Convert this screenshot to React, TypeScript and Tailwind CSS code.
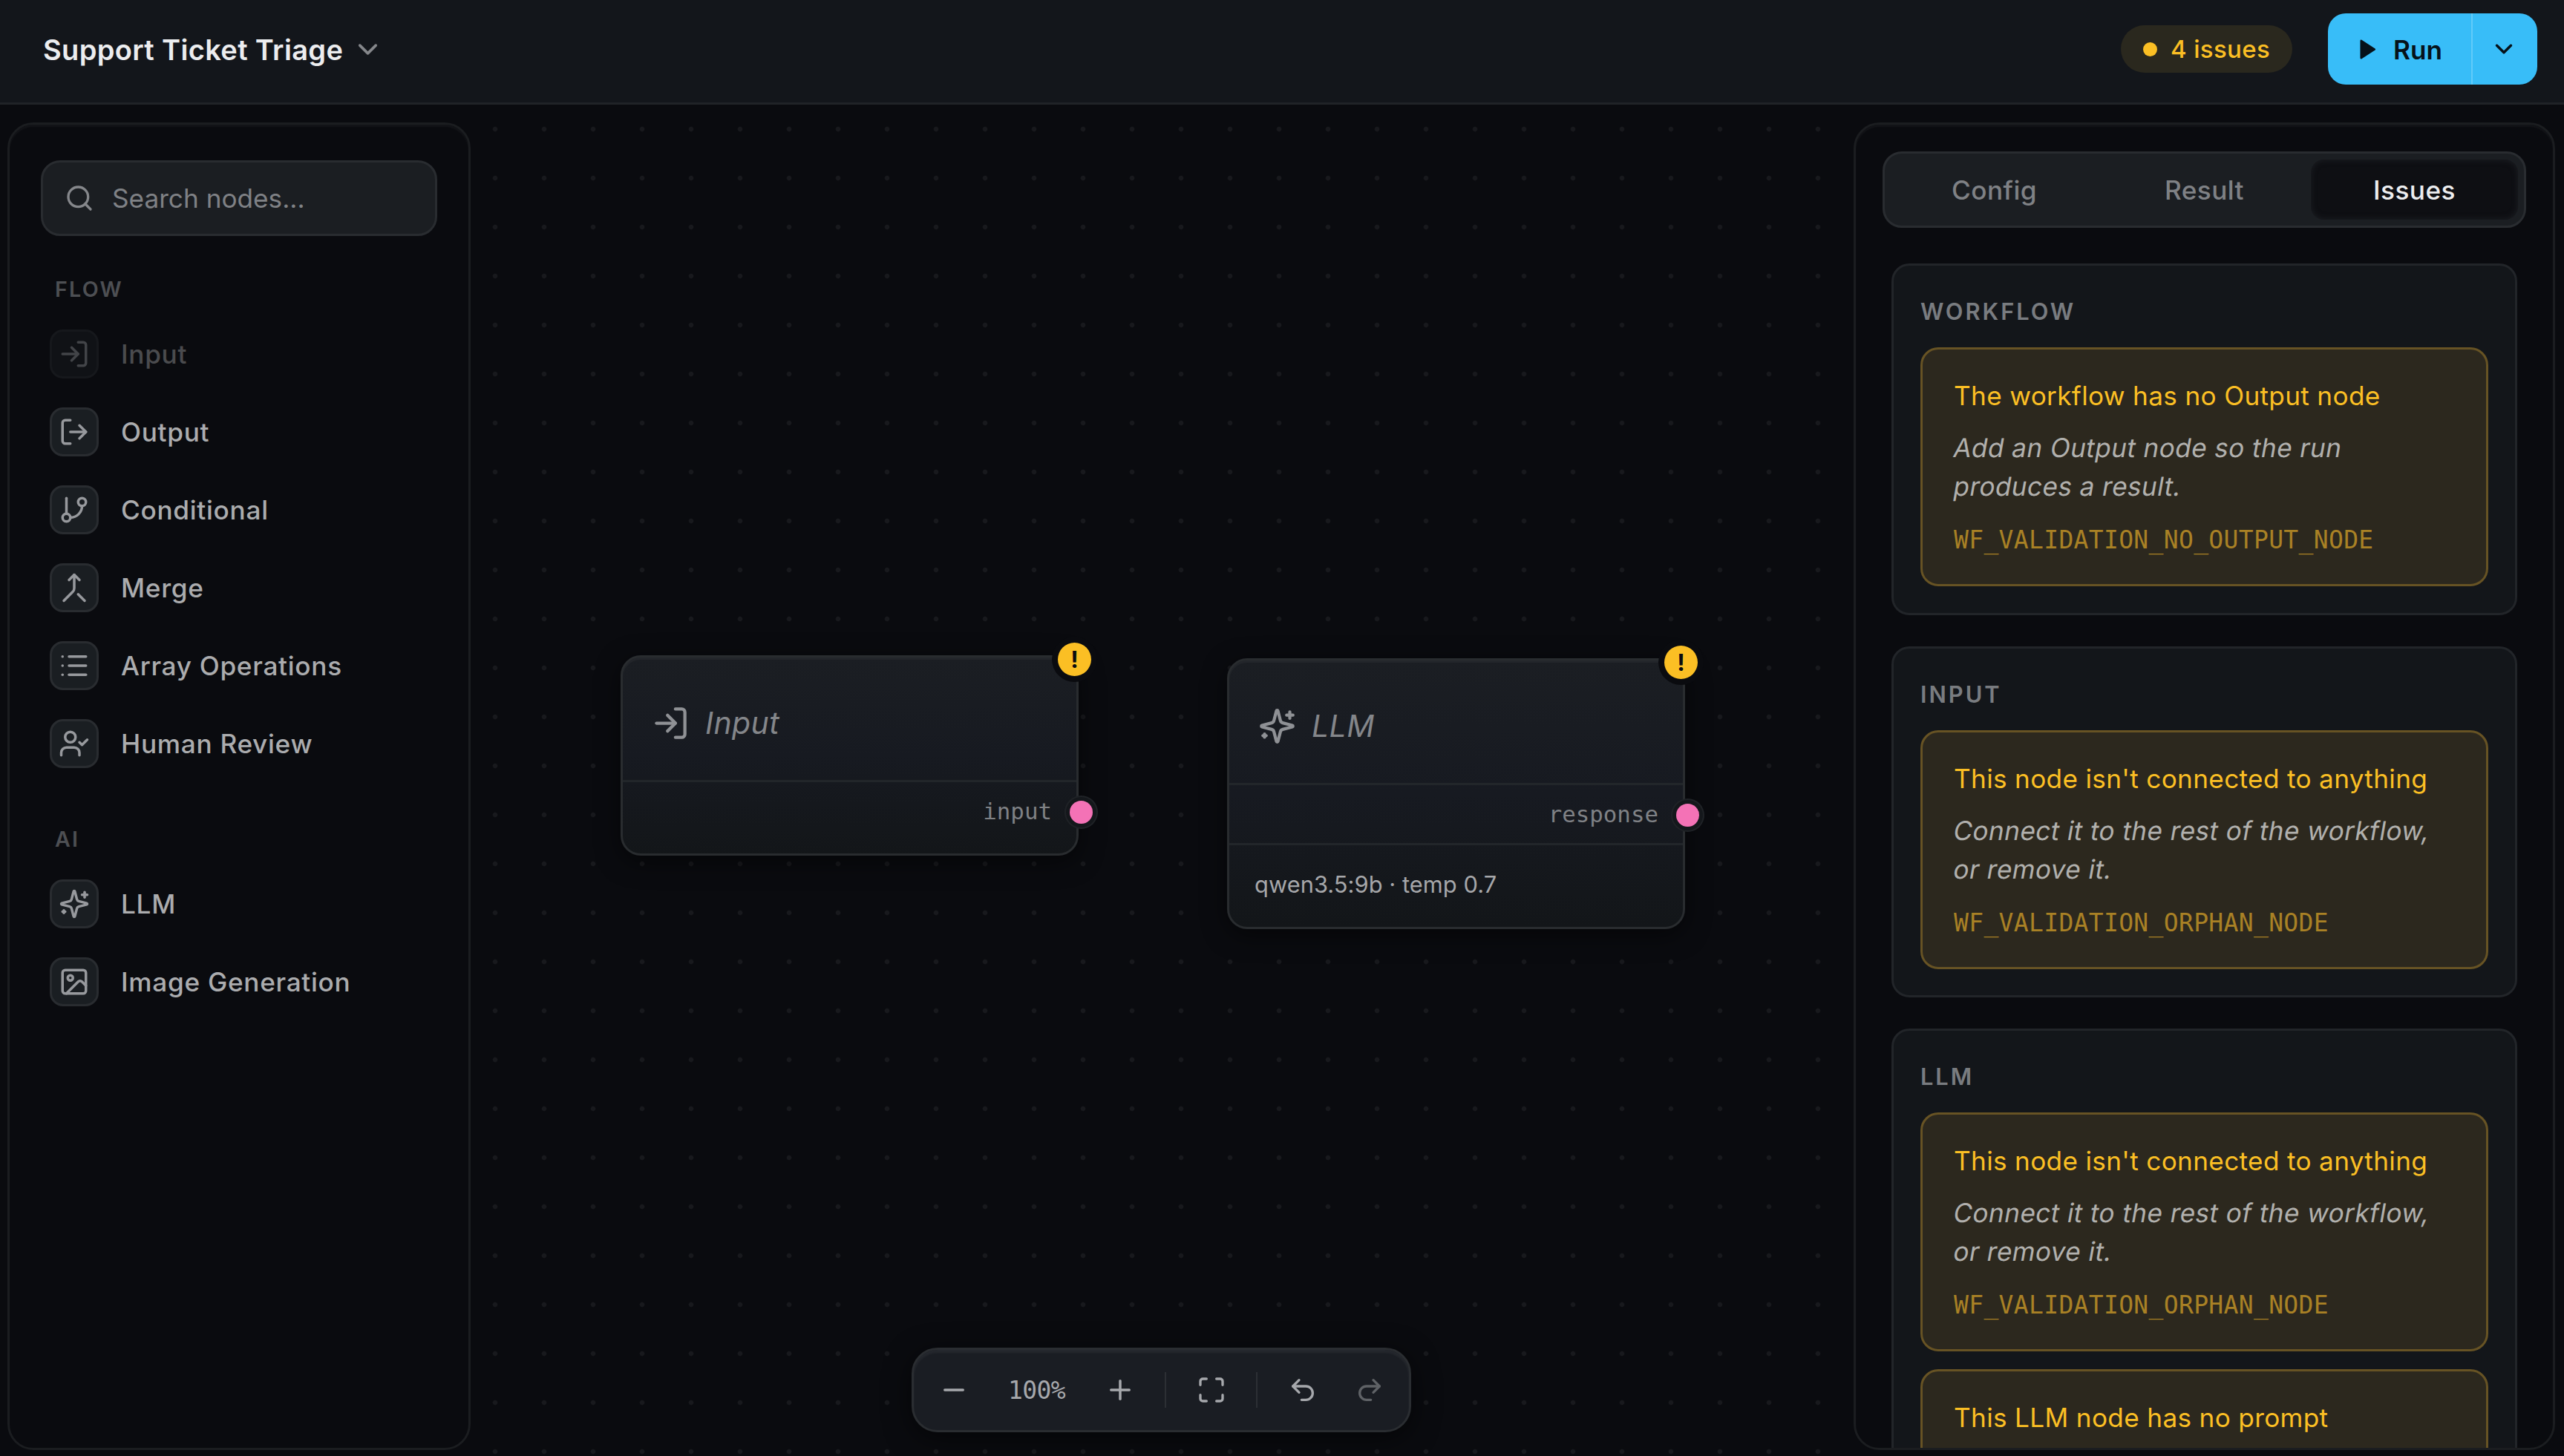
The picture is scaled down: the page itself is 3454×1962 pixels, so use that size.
import type { ComponentType, ReactNode } from "react";
import { useState } from "react";
import {
  ChevronDown,
  GitBranch,
  Image as ImageIcon,
  List,
  LogIn,
  LogOut,
  Maximize,
  Merge,
  Minus,
  Plus,
  Redo2,
  Search,
  Undo2,
  UserCheck,
} from "lucide-react";

type IconType = ComponentType<{ className?: string }>;

interface PaletteItem {
  label: string;
  icon: IconType;
  disabled?: boolean;
}

interface Issue {
  title: string;
  hint?: string[];
  code?: string;
}

function SparklesIcon({ className }: { className?: string }) {
  return (
    <svg
      viewBox="0 0 24 24"
      fill="none"
      stroke="currentColor"
      strokeWidth={2}
      strokeLinecap="round"
      strokeLinejoin="round"
      className={className}
    >
      <path d="M9.937 15.5A2 2 0 0 0 8.5 14.063l-6.135-1.582a.5.5 0 0 1 0-.962L8.5 9.936A2 2 0 0 0 9.937 8.5l1.582-6.135a.5.5 0 0 1 .963 0L14.063 8.5A2 2 0 0 0 15.5 9.937l6.135 1.581a.5.5 0 0 1 0 .964L15.5 14.063a2 2 0 0 0-1.437 1.437l-1.582 6.135a.5.5 0 0 1-.963 0z" />
      <path d="M20 3v4" />
      <path d="M22 5h-4" />
      <path d="M4 17v2" />
      <path d="M5 18H3" />
    </svg>
  );
}

const PALETTE: { title: string; items: PaletteItem[] }[] = [
  {
    title: "FLOW",
    items: [
      { label: "Input", icon: LogIn, disabled: true },
      { label: "Output", icon: LogOut },
      { label: "Conditional", icon: GitBranch },
      { label: "Merge", icon: Merge },
      { label: "Array Operations", icon: List },
      { label: "Human Review", icon: UserCheck },
    ],
  },
  {
    title: "AI",
    items: [
      { label: "LLM", icon: SparklesIcon },
      { label: "Image Generation", icon: ImageIcon },
    ],
  },
];

const ORPHAN: Issue = {
  title: "This node isn't connected to anything",
  hint: ["Connect it to the rest of the workflow,", "or remove it."],
  code: "WF_VALIDATION_ORPHAN_NODE",
};

const ISSUES: { title: string; issues: Issue[] }[] = [
  {
    title: "WORKFLOW",
    issues: [
      {
        title: "The workflow has no Output node",
        hint: ["Add an Output node so the run", "produces a result."],
        code: "WF_VALIDATION_NO_OUTPUT_NODE",
      },
    ],
  },
  { title: "INPUT", issues: [ORPHAN] },
  {
    title: "LLM",
    issues: [ORPHAN, { title: "This LLM node has no prompt" }],
  },
];

const TABS = ["Config", "Result", "Issues"];

function Header() {
  return (
    <header className="flex h-[141px] shrink-0 items-center justify-between border-b-3 border-[#202327] bg-[#13161b] pr-[36px] pb-[6px] pl-[58px]">
      <button className="flex items-center gap-[12px]">
        <span className="pt-[2px] text-[38px] font-semibold tracking-[0.009em] text-[#ecedef]">
          Support Ticket Triage
        </span>
        <ChevronDown className="size-[43px] text-[#85878b]" />
      </button>

      <div className="flex items-center gap-[48px]">
        <div className="flex h-[64px] items-center gap-[18px] rounded-full bg-[#2a281e] px-[30px] text-[#fbbf24]">
          <span className="size-[19px] rounded-full bg-[#fbbf24]" />
          <span className="pt-[1px] text-[33px] font-medium tracking-[0.01em]">
            4 issues
          </span>
        </div>
        <div className="flex h-[96px] overflow-hidden rounded-[24px] bg-[#38bdf8] text-[#06121a]">
          <button className="flex w-[193px] items-center justify-center gap-[20px] pr-[2px]">
            <svg
              viewBox="0 0 24 24"
              className="size-[31px]"
              fill="currentColor"
              stroke="currentColor"
              strokeWidth={2}
              strokeLinejoin="round"
            >
              <polygon points="6 3 20 12 6 21 6 3" />
            </svg>
            <span className="pt-[2px] text-[35.2px] font-semibold">Run</span>
          </button>
          <button className="flex w-[89px] items-center justify-center border-l-2 border-[#62cbf9] pr-[4px]">
            <ChevronDown className="size-[38px]" strokeWidth={2.2} />
          </button>
        </div>
      </div>
    </header>
  );
}

function PaletteRow({ item }: { item: PaletteItem }) {
  const Icon = item.icon;
  return (
    <button
      className={`flex h-[66px] items-center gap-[30px] text-left ${
        item.disabled ? "opacity-40" : ""
      }`}
    >
      <span className="flex size-[66px] items-center justify-center rounded-[18px] border-3 border-[#292c30] bg-[#1a1e22]">
        <Icon className="size-[42px] text-[#97999d]" />
      </span>
      <span className="pt-[1px] text-[35.2px] font-medium tracking-[0.02em] text-[#abacae]">
        {item.label}
      </span>
    </button>
  );
}

function Palette() {
  return (
    <aside className="mt-[24px] mb-[8px] ml-[10px] flex w-[624px] shrink-0 flex-col rounded-[35px] border-3 border-[#1b1d20] bg-[#0a0b0f] px-[42px] pt-[48px] shadow-[inset_0_3px_2px_rgba(255,255,255,0.04)]">
      <label className="flex h-[102px] items-center gap-[24px] rounded-[26px] border-3 border-[#292c30] bg-[#1b1e22] px-[29px]">
        <Search className="size-[40px] shrink-0 text-[#85878b]" />
        <input
          type="text"
          placeholder="Search nodes..."
          className="min-w-0 flex-1 bg-transparent text-[35.2px] outline-none placeholder:text-[#7f8185]"
        />
      </label>

      <div className="flex flex-col gap-[76px] px-[12px] pt-[52px]">
        {PALETTE.map((group) => (
          <div key={group.title}>
            <h3 className="mb-[34px] ml-[7px] text-[28.6px] leading-[40px] font-semibold tracking-[0.08em] text-[#4d4f53]">
              {group.title}
            </h3>
            <div className="flex flex-col gap-[39px]">
              {group.items.map((item) => (
                <PaletteRow key={item.label} item={item} />
              ))}
            </div>
          </div>
        ))}
      </div>
    </aside>
  );
}

interface FlowNodeProps {
  icon: IconType;
  name: string;
  port: string;
  className: string;
  children?: ReactNode;
}

function FlowNode({ icon: Icon, name, port, className, children }: FlowNodeProps) {
  return (
    <div
      className={`absolute flex w-[617px] flex-col rounded-[27px] border-3 border-[#292c2f] bg-linear-to-b from-[#1b1e23] via-[#171a21] to-[#131619] shadow-[inset_0_3px_1px_rgba(255,255,255,0.04),0_8px_32px_rgba(0,0,0,0.5)] ${className}`}
    >
      <div className="flex h-[168px] items-center gap-[21px] border-b-3 border-[#22262a] pt-[11px] pl-[39px]">
        <Icon className="size-[51px] text-[#8f9195]" />
        <span className="pt-[1px] text-[41px] tracking-[0.01em] text-[#84868a] italic">
          {name}
        </span>
      </div>
      <div className="relative flex h-[78px] items-center justify-end pr-[33px]">
        <span className="font-['DejaVu_Sans_Mono',monospace] text-[30.8px] text-[#7f8185]">
          {port}
        </span>
        <span className="absolute top-[25px] -right-[22px] size-[31px] rounded-full bg-[#f472b6] shadow-[0_0_0_5px_#14171b,0_0_0_7px_#1f2226]" />
      </div>
      {children}
      {/* Validation marker */}
      <span className="absolute -top-[20px] -right-[20px] flex size-[45px] items-center justify-center rounded-full bg-[#fbbf24] text-[31px] leading-none font-bold text-[#0a0b0f] shadow-[0_0_0_8px_#0a0b0f]">
        !
      </span>
    </div>
  );
}

function Toolbar() {
  return (
    <div className="absolute bottom-[32px] left-[594px] flex h-[114px] w-[673px] items-center rounded-[35px] border-3 border-[#2a2d31] bg-[#1a1d23] pl-[33px] text-[#a6a8ac] shadow-[inset_0_4px_3px_rgba(255,255,255,0.05),0_8px_36px_rgba(0,0,0,0.55)]">
      <Minus className="size-[42px]" />
      <span className="w-[182px] pt-[2px] pr-[1px] text-center font-['DejaVu_Sans_Mono',monospace] text-[33px] tracking-[-0.02em]">
        100%
      </span>
      <Plus className="size-[42px]" />
      <span className="ml-[39px] h-[48px] w-[2px] bg-[#2c2f34]" />
      <Maximize className="ml-[41px] size-[40px]" />
      <span className="ml-[40px] h-[48px] w-[2px] bg-[#2c2f34]" />
      <Undo2 className="ml-[41px] size-[40px]" />
      <Redo2 className="ml-[50px] size-[40px] text-[#5f6266]" />
    </div>
  );
}

function Canvas() {
  return (
    <section className="relative min-w-0 flex-1 bg-[radial-gradient(circle_at_center,#18191d_2.6px,transparent_3.8px)] bg-size-[66px_66px]">
      <FlowNode
        icon={LogIn}
        name="Input"
        port="input"
        className="top-[742px] left-[202px] h-[270px]"
      />
      <FlowNode
        icon={SparklesIcon}
        name="LLM"
        port="response"
        className="top-[746px] left-[1019px] h-[365px]"
      >
        <div className="flex flex-1 items-center border-t-3 border-[#22262a] pb-[4px] pl-[34px]">
          <span className="text-[30.8px] tracking-[0.002em] text-[#a6a7aa]">
            qwen3.5:9b · temp 0.7
          </span>
        </div>
      </FlowNode>
      <Toolbar />
    </section>
  );
}

function IssueCard({ issue }: { issue: Issue }) {
  return (
    <div className="flex h-[322px] shrink-0 flex-col rounded-[24px] border-3 border-[#675324] bg-[#2c281e] px-[42px] pt-[36px]">
      <p className="text-[35.2px] leading-[52px] tracking-[0.009em] whitespace-nowrap text-[#fbbf24]">
        {issue.title}
      </p>
      {issue.hint && (
        <p className="mt-[18px] text-[35.2px] leading-[52px] tracking-[0.011em] whitespace-nowrap text-[#b1b0ad]">
          {/* slanted upright letters, one line at a time */}
          {issue.hint.map((line) => (
            <span key={line} className="block -skew-x-[10deg]">
              {line}
            </span>
          ))}
        </p>
      )}
      {issue.code && (
        <p className="mt-[22px] font-['DejaVu_Sans_Mono',monospace] text-[33px] leading-[50px] tracking-[0.01em] whitespace-nowrap text-[#a98125]">
          {issue.code}
        </p>
      )}
    </div>
  );
}

function Inspector() {
  const [tab, setTab] = useState("Issues");

  return (
    <aside className="mt-[24px] mr-[12px] mb-[8px] flex w-[945px] shrink-0 flex-col overflow-hidden rounded-[35px] border-3 border-[#1b1d20] bg-[#0a0b0f] px-[36px] pt-[36px] shadow-[inset_0_3px_2px_rgba(255,255,255,0.04)]">
      <div className="flex h-[103px] shrink-0 gap-[4px] rounded-[26px] border-3 border-[#292c30] bg-[#1b1e22] p-[8px]">
        {TABS.map((name) => (
          <button
            key={name}
            onClick={() => setTab(name)}
            className={`flex-1 rounded-[18px] pt-[2px] text-[35.2px] font-medium tracking-[0.012em] ${
              tab === name
                ? "bg-[#0e0f13] text-[#ecedef] shadow-[inset_0_0_8px_rgba(40,43,48,0.6)]"
                : "text-[#7f8185]"
            }`}
          >
            {name}
          </button>
        ))}
      </div>

      <div className="mt-[48px] flex flex-col gap-[42px] px-[12px]">
        {ISSUES.map((group) => (
          <div
            key={group.title}
            className="flex shrink-0 flex-col rounded-[24px] border-3 border-[#222529] bg-[#13161a] px-[36px] pt-[38px] pb-[35.5px]"
          >
            <h3 className="mb-[25px] pt-[1px] text-[30.8px] leading-[46px] font-semibold tracking-[0.096em] text-[#797c80]">
              {group.title}
            </h3>
            <div className="flex flex-col gap-[24px]">
              {group.issues.map((issue) => (
                <IssueCard key={issue.title} issue={issue} />
              ))}
            </div>
          </div>
        ))}
      </div>
    </aside>
  );
}

export default function App() {
  return (
    <div className="flex h-screen flex-col overflow-hidden bg-[#0a0b0f] font-['Inter',sans-serif]">
      <Header />
      <main className="flex min-h-0 flex-1">
        <Palette />
        <Canvas />
        <Inspector />
      </main>
    </div>
  );
}
